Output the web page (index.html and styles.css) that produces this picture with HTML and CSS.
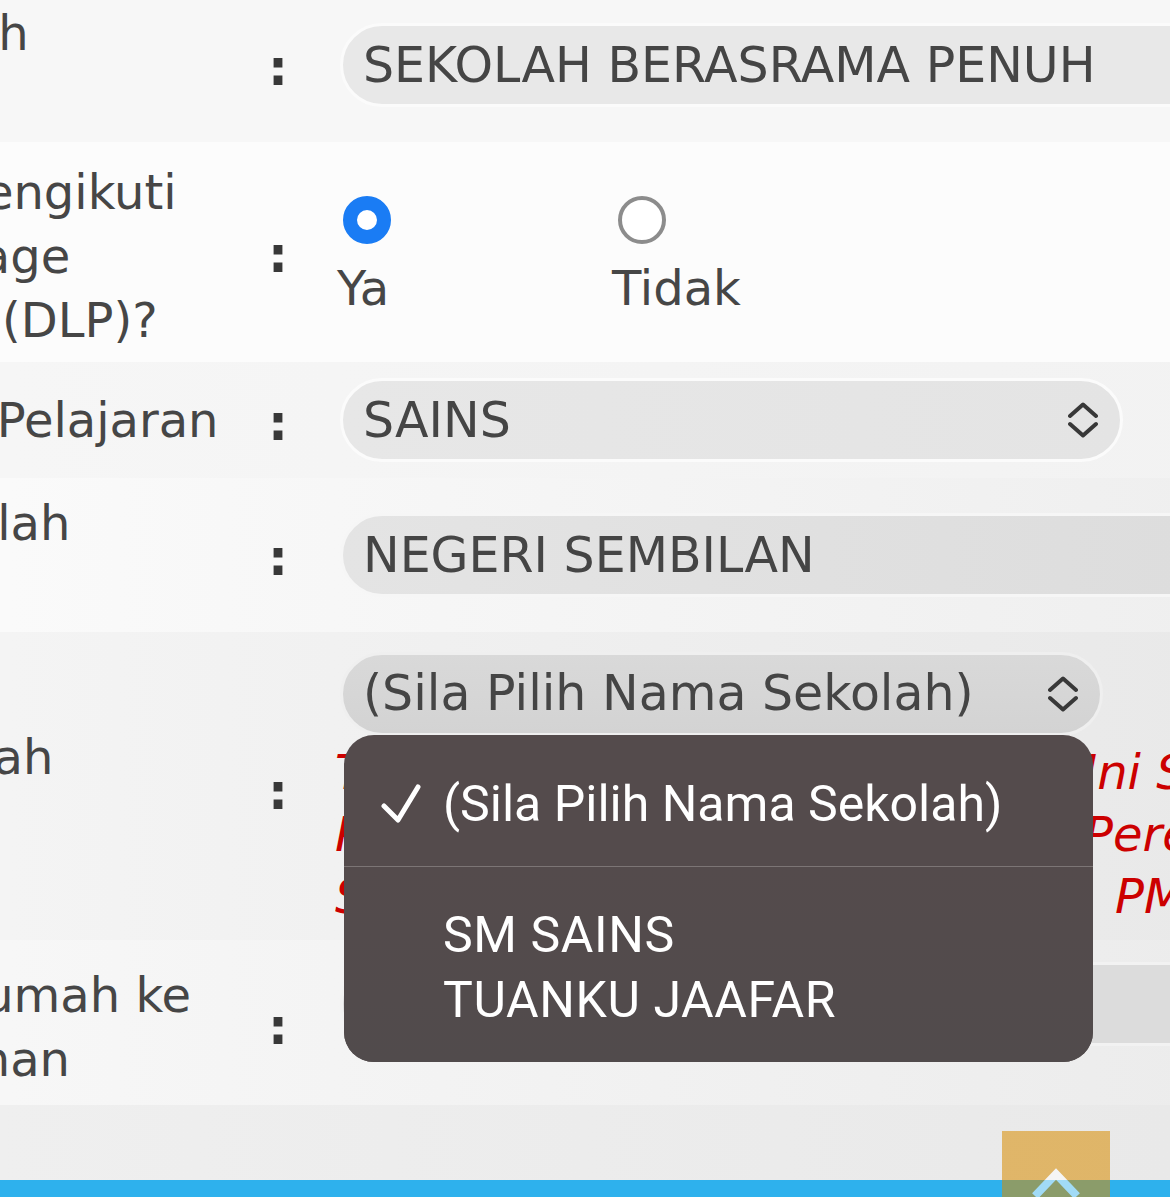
FILE: index.html
```html
<!DOCTYPE html>
<html lang="ms">
<head>
<meta charset="utf-8">
<title>Borang Permohonan</title>
<link rel="stylesheet" href="styles.css">
</head>
<body>
<div class="page">
  <div class="form">
    <div class="row r1">
      <div class="label">Taraf Sekolah<br>Asal</div>
      <div class="colon">:</div>
      <div class="cell"><div class="field wide">SEKOLAH BERASRAMA PENUH</div></div>
    </div>
    <div class="row r2">
      <div class="label">Calon itu mengikuti<br>Dual Language<br>Programme (DLP)?</div>
      <div class="colon">:</div>
      <div class="cell">
        <div class="radios">
          <div class="opt"><span class="radio on"></span><span class="opt-text">Ya</span></div>
          <div class="opt"><span class="radio off"></span><span class="opt-text">Tidak</span></div>
        </div>
      </div>
    </div>
    <div class="row r3">
      <div class="label">Aliran Mata Pelajaran</div>
      <div class="colon">:</div>
      <div class="cell">
        <div class="field select s3"><span>SAINS</span>
          <svg class="updown" width="30" height="40" viewBox="0 0 30 40"><path d="M2 16 L15 4.5 L28 16 M2 24 L15 35.5 L28 24"/></svg>
        </div>
      </div>
    </div>
    <div class="row r4">
      <div class="label">Negeri Sekolah<br>Pilihan</div>
      <div class="colon">:</div>
      <div class="cell"><div class="field wide grad">NEGERI SEMBILAN</div></div>
    </div>
    <div class="row r5">
      <div class="label">Nama Sekolah<br>Pilihan</div>
      <div class="colon">:</div>
      <div class="cell stack">
        <div class="field select s5 focus"><span>(Sila Pilih Nama Sekolah)</span>
          <svg class="updown" width="30" height="40" viewBox="0 0 30 40"><path d="M2 16 L15 4.5 L28 16 M2 24 L15 35.5 L28 24"/></svg>
        </div>
        <div class="note">
          <div class="nline"><span class="nhead h1">Tiada Pilihan Sekolah? Sekolah</span><span>Ini Sekolah Khas</span></div>
          <div class="nline"><span class="nhead h2">Pelajar Lelaki Sahaja. Pilih</span><span>Perempuan Jika</span></div>
          <div class="nline"><span class="nhead h3">Sila Rujuk Syarat Kelayakan</span><span>PMR</span></div>
        </div>
      </div>
    </div>
    <div class="row r6">
      <div class="label">Jarak dari Rumah ke<br>Sekolah Pilihan</div>
      <div class="colon">:</div>
      <div class="cell"><div class="field wide empty"></div></div>
    </div>
  </div>
  <div class="spacer"></div>
  <div class="bar"></div>

  <div class="menu">
    <div class="item">
      <svg class="check" width="40" height="40" viewBox="0 0 40 40"><path d="M3 23 L17 37 L37 4"/></svg>
      <span>(Sila Pilih Nama Sekolah)</span>
    </div>
    <div class="item second">
      <span>SM SAINS<br>TUANKU JAAFAR</span>
    </div>
  </div>

  <div class="totop">
    <svg width="108" height="108" viewBox="0 0 108 108"><path d="M33 65 L54 43 L75 65"/></svg>
  </div>
</div>
</body>
</html>
```

FILE: styles.css
```css
html, body {
  margin: 0;
  padding: 0;
}
body {
  overflow: hidden;
  height: 1197px;
  background: #ececec;
  font-family: "DejaVu Sans", Verdana, sans-serif;
}
.page {
  position: relative;
  height: 1197px;
  overflow: hidden;
}
.form {
  margin-left: -292px;
  margin-top: -12px;
  width: 1600px;
}
.row {
  display: grid;
  grid-template-columns: 564px 68px 1fr;
  align-items: center;
  box-sizing: border-box;
}
.r1 { height: 154px; background: #f7f7f7; }
.r2 { height: 220px; background: #fcfcfc; padding-top: 12px; }
.r2 .label { margin-top: -4px; }
.r2 .colon { margin-top: -12px; }
.r3 { height: 116px; background: linear-gradient(90deg, #f6f6f6 300px, #f2f2f2); }
.r4 { height: 154px; background: linear-gradient(90deg, #fafafa 300px, #eeeeee); }
.r5 { height: 308px; padding-top: 6px; background: linear-gradient(90deg, #f4f4f4 300px, #e8e8e8); }
.r6 { height: 165px; padding-top: 8px; background: linear-gradient(90deg, #f7f7f7 300px, #ebebeb); }

.label {
  font-size: 48px;
  line-height: 64px;
  color: #464646;
  white-space: nowrap;
}
.colon {
  font-size: 50px;
  font-weight: bold;
  line-height: 64px;
  color: #383838;
  margin-left: -4px;
  padding-top: 6px;
}
.r6 .colon { padding-top: 0; }

.field {
  box-sizing: border-box;
  height: 84px;
  border: 3px solid #fbfbfb;
  border-radius: 42px;
  background: #e8e8e8;
  padding: 0 22px 0 20px;
  display: flex;
  align-items: center;
  font-size: 49px;
  color: #454545;
  white-space: nowrap;
}
.field.grad { background: linear-gradient(90deg, #e4e4e4, #dcdcdc); border-color: #f6f6f6; }
.field.empty { background: #dcdcdc; border-color: #f2f2f2; margin-bottom: 46px; }
.select { justify-content: space-between; }
.s3 { width: 783px; background: linear-gradient(90deg, #e7e7e7, #e4e4e4); }
.s5 { width: 763px; }
.focus { background: linear-gradient(180deg, #d9d9d9, #d3d3d3); border-color: #efefef; }
.updown path {
  fill: none;
  stroke: #383838;
  stroke-width: 4;
  stroke-linecap: round;
  stroke-linejoin: round;
}

.radios {
  display: flex;
  margin-left: -3px;
}
.opt {
  width: 275px;
  display: flex;
  flex-direction: column;
  align-items: flex-start;
  gap: 12px;
}
.radio {
  display: block;
  width: 48px;
  height: 48px;
  margin-left: 6px;
  box-sizing: border-box;
  border-radius: 50%;
  background: #ffffff;
}
.radio.on { border: 14px solid #1a7cf4; }
.radio.off { border: 4px solid #8c8c8c; }
.opt-text {
  font-size: 48px;
  line-height: 64px;
  color: #464646;
}

.stack {
  display: flex;
  flex-direction: column;
}
.note {
  margin-top: 5px;
  margin-left: -5px;
  font-size: 48px;
  line-height: 62px;
  font-style: italic;
  color: #cc0000;
}
.nline {
  display: flex;
  white-space: nowrap;
}
.nhead { overflow: hidden; flex: 0 0 auto; }
.h1 { width: 748px; }
.h2 { width: 749px; }
.h3 { width: 780px; }

.spacer {
  height: 75px;
  background: linear-gradient(90deg, #efefef, #e9e9e9);
}
.bar {
  height: 40px;
  background: #2eb1ed;
}

.menu {
  position: absolute;
  left: 344px;
  top: 735px;
  width: 749px;
  background: #544b4c;
  border-radius: 30px;
  overflow: hidden;
  font-family: Roboto, "Liberation Sans", sans-serif;
  font-size: 50px;
  line-height: 65px;
  color: #ffffff;
}
.item {
  display: flex;
  align-items: center;
  padding: 37px 0 29px 0;
}
.item.second {
  border-top: 1px solid #7c7575;
  padding: 36px 0 29px 99px;
  background: linear-gradient(180deg, #544b4c, #514b4c);
  letter-spacing: 0.6px;
}
.check {
  margin-left: 37px;
  margin-right: 22px;
  margin-top: -3px;
}
.check path {
  fill: none;
  stroke: #ffffff;
  stroke-width: 5;
  stroke-linecap: round;
  stroke-linejoin: round;
}

.totop {
  position: absolute;
  left: 1002px;
  top: 1131px;
  width: 108px;
  height: 108px;
  background: #d88c00;
  opacity: 0.55;
}
.totop path {
  fill: none;
  stroke: #ffffff;
  stroke-width: 8;
}
```
